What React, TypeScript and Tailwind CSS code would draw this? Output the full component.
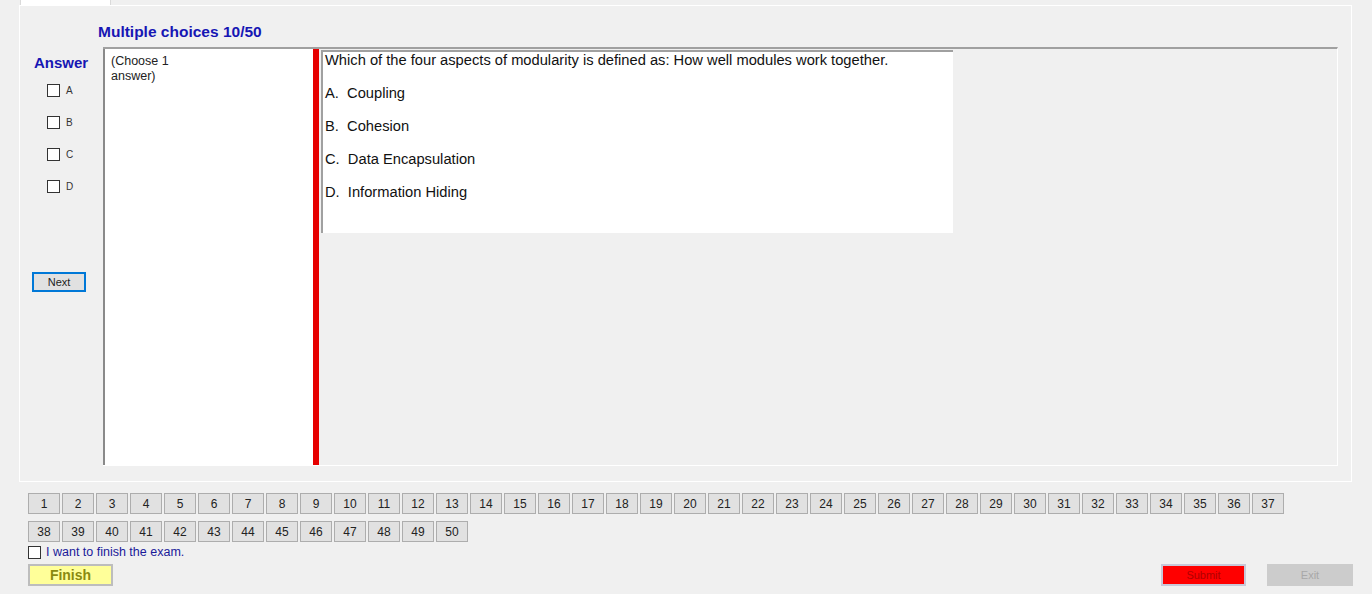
import React from "react";

const options = ["A", "B", "C", "D"];
const answers = ["Coupling", "Cohesion", "Data Encapsulation", "Information Hiding"];
const row1 = Array.from({ length: 37 }, (_, i) => i + 1);
const row2 = Array.from({ length: 13 }, (_, i) => i + 38);

function Box() {
  return <span className="block w-[13px] h-[13px] border border-[#333] bg-white shrink-0" />;
}

function NumButton({ n }: { n: number }) {
  return (
    <div className="w-[32px] h-[21px] bg-[#e1e1e1] border border-[#adadad] flex items-center justify-center text-[12px] text-[#222]">
      {n}
    </div>
  );
}

export default function App() {
  return (
    <div className="w-[1372px] h-[594px] bg-[#f0f0f0] overflow-hidden font-['Liberation_Sans',Arial,sans-serif] text-black">
      {/* tab header */}
      <div className="h-[5px] pl-[20px]">
        <div className="w-[91px] h-full bg-white border-x border-[#dadada]" />
      </div>

      {/* tab page */}
      <div className="ml-[19px] w-[1333px] h-[477px] border border-white">
        <div className="pl-[78px] pt-[17px] h-[41px] text-[15.5px] font-bold text-[#1616b4] leading-[18px]">
          Multiple choices 10/50
        </div>

        <div className="flex">
          <div className="w-[83px] shrink-0 flex flex-col">
            <div className="pl-[14px] pt-[7px] text-[15px] font-bold text-[#1616b4] leading-[18px]">Answer</div>
            <div className="flex flex-col gap-[19px] pl-[27px] pt-[12px]">
              {options.map((o) => (
                <div key={o} className="flex items-center gap-[6px] h-[13px]">
                  <Box />
                  <span className="text-[10px] text-[#333]">{o}</span>
                </div>
              ))}
            </div>
            <div className="pl-[12px] pt-[79px]">
              <div className="w-[54px] h-[20px] border-2 border-[#0078d7] bg-[#e1e1e1] flex items-center justify-center text-[11px] text-[#222]">
                Next
              </div>
            </div>
          </div>

          <div className="w-[1235px] h-[419px] flex border-t-2 border-t-[#a0a0a0] border-r border-r-white border-b border-b-white">
            <div className="w-[210px] h-full bg-white border-l-2 border-l-[#8a8a8a] pl-[6px] pt-[5px]">
              <div className="w-[72px] text-[12.5px] leading-[15px] text-[#222]">(Choose 1 answer)</div>
            </div>
            <div className="w-[6px] h-full bg-[#e60000]" />
            <div className="flex-1 pl-[2px] pt-[1px]">
              <div className="w-[632px] h-[183px] bg-white border-t-2 border-l-2 border-[#a0a0a0] pl-[2px] text-[14.7px] leading-[16px] text-[#111]">
                <div>Which of the four aspects of modularity is defined as: How well modules work together.</div>
                {answers.map((a, i) => (
                  <div key={a} className="mt-[17px] whitespace-pre">
                    {options[i]}.  {a}
                  </div>
                ))}
              </div>
            </div>
          </div>
        </div>
      </div>

      {/* bottom */}
      <div className="pl-[28px] pt-[11px]">
        <div className="flex gap-[2px]">
          {row1.map((n) => (
            <NumButton key={n} n={n} />
          ))}
        </div>
        <div className="flex gap-[2px] mt-[7px]">
          {row2.map((n) => (
            <NumButton key={n} n={n} />
          ))}
        </div>
        <div className="flex items-center gap-[5px] mt-[3px] h-[14px]">
          <Box />
          <span className="text-[12.5px] text-[#1a1a9a]">I want to finish the exam.</span>
        </div>
        <div className="flex items-end mt-[5px]">
          <div className="w-[85px] h-[22px] bg-[#ffff99] border-2 border-[#bdbdbd] flex items-center justify-center text-[14px] font-bold text-[#8a8a10]">
            Finish
          </div>
          <div className="ml-auto w-[85px] h-[22px] bg-[#ff0000] border-2 border-[#c8c8d8] flex items-center justify-center text-[11px] text-[#b00000]">
            Submit
          </div>
          <div className="ml-[21px] mr-[19px] w-[86px] h-[22px] bg-[#cccccc] flex items-center justify-center text-[11px] text-[#a8a8a8]">
            Exit
          </div>
        </div>
      </div>
    </div>
  );
}
